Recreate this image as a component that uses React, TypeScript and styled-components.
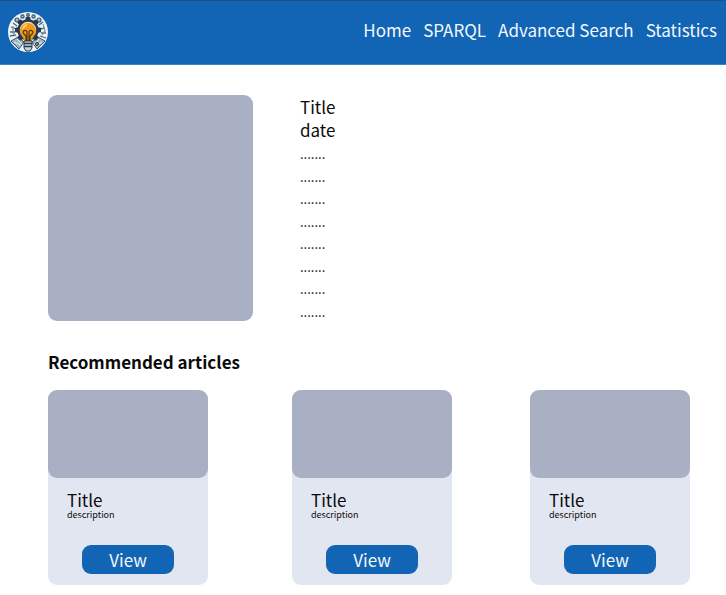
import React from "react";
import styled, { createGlobalStyle } from "styled-components";

const GlobalStyle = createGlobalStyle`
  *, *::before, *::after { box-sizing: border-box; }
  body {
    margin: 0;
    background: #fff;
    color: #0b0b0c;
    font-family: "Noto Sans CJK SC", "Noto Sans", sans-serif;
    font-size: 17px;
    line-height: 22px;
  }
  h1, h2, h3, p { margin: 0; padding: 0; font-size: inherit; font-weight: 400; }
`;

const Header = styled.header`
  display: flex;
  align-items: center;
  justify-content: space-between;
  height: 65px;
  padding: 0 9px 1px 8px;
  background: #1264b5;
  border-top: 1px solid #175291;
  border-bottom: 1px solid #3d80c3;
`;

const HomeLink = styled.a`
  display: block;
  height: 40px;
`;

const Nav = styled.nav`
  display: flex;
  gap: 12px;
  padding-bottom: 4px;
`;

const NavLink = styled.a`
  color: #f4f8fc;
  text-decoration: none;
  white-space: nowrap;
`;

const Main = styled.main`
  padding: 30px 36px 10px 48px;
`;

const Article = styled.article`
  display: flex;
  gap: 47px;
`;

const Cover = styled.div`
  flex: none;
  width: 205px;
  height: 226px;
  border-radius: 9px;
  background: #aab0c3;
`;

const Details = styled.div`
  display: flex;
  flex-direction: column;
  justify-content: space-between;
  padding-top: 1px;
`;

const Line = styled.p`
  height: 22px;
  && { font-size: 13px; }
  line-height: 25px;
`;

const SectionTitle = styled.h2`
  && { margin: 30px 0 17px; font-weight: 700; }
`;

const Cards = styled.div`
  display: grid;
  grid-template-columns: 244fr 238fr 160fr;
`;

const Card = styled.article`
  display: flex;
  flex-direction: column;
  width: 160px;
  height: 195px;
  border-radius: 9px;
  background: #e2e6f1;
`;

const Thumbnail = styled.div`
  height: 88px;
  border-radius: 9px;
  background: #aab0c3;
`;

const CardText = styled.div`
  flex: 1;
  padding: 11px 19px 0;
`;

const Description = styled.p`
  && { font-size: 9px; line-height: 8px; }
`;

const ViewButton = styled.button`
  align-self: center;
  width: 92px;
  height: 29px;
  margin-bottom: 11px;
  padding: 0;
  border: 0;
  border-radius: 9px;
  background: #1264b5;
  color: #f4f8fc;
  font: inherit;
  cursor: pointer;
`;

const teeth = [-135, -90, -45, 0, 45, 90, 135];

function Logo() {
  return (
    <svg width="40" height="40" viewBox="0 0 40 40" role="img" aria-label="Home">
      <circle cx="20" cy="20" r="20" fill="#f2f4f3" />
      <g fill="#a9bccb" stroke="#315476" strokeWidth="1.2">
        <circle cx="9" cy="8" r="2" />
        <circle cx="14.5" cy="4.5" r="1.6" />
        <circle cx="20" cy="3" r="1.3" />
        <circle cx="25.5" cy="4.5" r="1.6" />
        <circle cx="31" cy="8" r="2" />
      </g>
      <g fill="none" stroke="#456783" strokeWidth="1.3">
        <path d="M5 11l4 3M3 15l5 2M2 20h5M2 24l6-1M31 13l4-3M32 17l5-1M33 21h5M32 24l6 2" />
        <path d="M5 14v7l3 3M35 12l2 7-3 4" stroke="#7d97aa" />
      </g>
      <path d="M3 29l7-4 6 5-5 7zM37 29l-7-4-6 5 5 7z" fill="#9db3c3" stroke="#345878" />
      <path d="M6 30l7 3M9 27l5 5M31 27l-5 6M34 30l-6 4" stroke="#eef1f2" />
      <circle cx="29" cy="32" r="1.5" fill="#d58b2b" stroke="#26394e" />
      <g fill="#26394e">
        {teeth.map((angle) => (
          <rect key={angle} x="17.5" y="5" width="5" height="5" rx="1" transform={`rotate(${angle} 20 18)`} />
        ))}
      </g>
      <circle cx="20" cy="18" r="9.5" fill="#e9e5d8" stroke="#26394e" strokeWidth="2.5" />
      <path d="M12 19a8 8 0 1 1 16 0c0 4-4 6-4 10h-8c0-4-4-6-4-10z" fill="#f39b14" />
      <path d="M15 17a5 5 0 0 1 4-4" fill="none" stroke="#ffc96a" strokeWidth="2" />
      <path d="M18 29v-5l-2-2a2 2 0 1 1 3-1v8M21 29v-8a2 2 0 1 1 3 1l-2 2v5" fill="none" stroke="#49361d" strokeWidth="1.2" />
      <path d="M16 29h8v7l-2 3h-4l-2-3z" fill="#c4d1d9" stroke="#24384d" />
      <path d="M16 31.5h8M16 34.5h8" stroke="#24384d" strokeWidth="1.3" />
    </svg>
  );
}

const links = ["Home", "SPARQL", "Advanced Search", "Statistics"];
const lines = Array.from({ length: 8 }, (_, i) => i);
const articles = [1, 2, 3];

export default function App() {
  return (
    <>
      <GlobalStyle />
      <Header>
        <HomeLink href="#"><Logo /></HomeLink>
        <Nav>
          {links.map((label) => <NavLink key={label} href="#">{label}</NavLink>)}
        </Nav>
      </Header>
      <Main>
        <Article>
          <Cover />
          <Details>
            <h1>Title</h1>
            <p>date</p>
            {lines.map((line) => <Line key={line}>.......</Line>)}
          </Details>
        </Article>
        <SectionTitle>Recommended articles</SectionTitle>
        <Cards>
          {articles.map((id) => (
            <Card key={id}>
              <Thumbnail />
              <CardText>
                <h3>Title</h3>
                <Description>description</Description>
              </CardText>
              <ViewButton type="button">View</ViewButton>
            </Card>
          ))}
        </Cards>
      </Main>
    </>
  );
}
